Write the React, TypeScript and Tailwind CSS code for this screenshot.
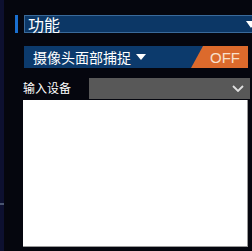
import React from "react";

export default function App() {
  return (
    <div
      className="w-[252px] h-[251px] bg-[#05060e] flex overflow-hidden"
      style={{ fontFamily: '"Noto Sans CJK SC", "Noto Sans", sans-serif' }}
    >
      <div className="w-[4px] h-full bg-[#0d1030] flex flex-col">
        <div className="h-[203px]" />
        <div className="h-[2px] bg-[#4a5570]" />
      </div>
      <div className="flex-1 flex flex-col pl-[11px] pt-[15px]">
        <div className="flex items-stretch h-[18px]">
          <div className="w-[3px] bg-[#1a6fd0]" />
          <div className="ml-[6px] flex-1 border border-[#3a6a9a] bg-[#0c3766] flex items-center pl-[3px] pr-[0px] -mr-[6px] relative">
            <span className="text-white text-[16px] leading-none">功能</span>
            <svg className="absolute right-[1px] top-[5px]" width="10" height="7" viewBox="0 0 10 7">
              <polygon points="0,0 10,0 5,7" fill="#ffffff" />
            </svg>
          </div>
        </div>
        <div className="mt-[13px] ml-[9px] mr-[4px] h-[22px] bg-[#0c3a6c] flex items-center relative overflow-hidden">
          <span className="text-white text-[14px] leading-none pl-[9px]">摄像头面部捕捉</span>
          <svg className="ml-[5px]" width="10" height="6" viewBox="0 0 10 6">
            <polygon points="0,0 10,0 5,6" fill="#ffffff" />
          </svg>
          <div
            className="absolute right-0 top-0 h-full w-[57px] bg-[#dc6a2c] flex items-center justify-end pr-[8px]"
            style={{ clipPath: "polygon(12px 0, 100% 0, 100% 100%, 0 100%)" }}
          >
            <span className="text-[#f8e0cc] text-[15px] leading-none" style={{ fontFamily: '"Liberation Sans", sans-serif' }}>OFF</span>
          </div>
        </div>
        <div className="mt-[9px] ml-[8px] flex items-center h-[22px]">
          <span className="text-white text-[12px] w-[66px] leading-none">输入设备</span>
          <div className="flex-1 h-[21px] bg-[#585858] flex items-center justify-end pr-[6px] mr-[2px]">
            <svg width="12" height="7" viewBox="0 0 12 7">
              <polyline points="1,1 6,6 11,1" fill="none" stroke="#e0e0e0" strokeWidth="1.8" />
            </svg>
          </div>
        </div>
        <div className="mt-[1px] ml-[8px] mr-[4px] h-[147px] bg-white border-r border-b border-[#9a9a9a]" />
      </div>
    </div>
  );
}
